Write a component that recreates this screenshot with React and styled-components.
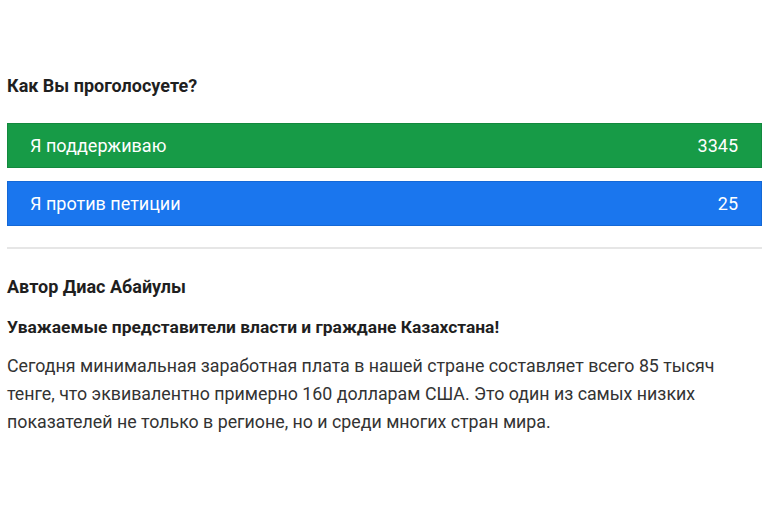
import React from "react";
import styled, { createGlobalStyle } from "styled-components";

const GlobalStyle = createGlobalStyle`
  html, body {
    margin: 0;
    padding: 0;
    background: #fff;
  }
  body {
    font-family: Roboto, "Noto Sans", sans-serif;
    color: #1f1f1f;
  }
`;

const Page = styled.div`
  padding: 74px 5px 0 7px;
`;

const Question = styled.h3`
  margin: 0 0 25px;
  font-size: 18px;
  font-weight: 700;
  line-height: 24px;
`;

const Options = styled.div`
  display: flex;
  flex-direction: column;
  gap: 13px;
`;

const VoteButton = styled.button`
  display: flex;
  justify-content: space-between;
  align-items: center;
  height: 45px;
  padding: 0 23px 0 22px;
  border: 1px solid ${(p) => p.$border};
  background: ${(p) => p.$color};
  color: #fff;
  font-family: inherit;
  font-size: 18px;
  cursor: pointer;
`;

const Divider = styled.hr`
  margin: 21px 0 26px;
  border: 0;
  border-top: 2px solid #e6e6e6;
`;

const Author = styled.div`
  font-size: 18px;
  font-weight: 700;
  line-height: 24px;
  margin-bottom: 16px;
`;

const Title = styled.div`
  font-size: 17.4px;
  font-weight: 700;
  line-height: 24px;
  margin-bottom: 13px;
`;

const Text = styled.p`
  margin: 0;
  font-size: 17.8px;
  line-height: 28px;
  color: #333;
  max-width: 740px;
`;

const options = [
  { label: "Я поддерживаю", count: 3345, color: "#179b47", border: "#13893e" },
  { label: "Я против петиции", count: 25, color: "#1a76ee", border: "#1468d6" },
];

export default function App() {
  return (
    <>
      <GlobalStyle />
      <Page>
        <Question>Как Вы проголосуете?</Question>
        <Options>
          {options.map((o) => (
            <VoteButton key={o.label} $color={o.color} $border={o.border}>
              <span>{o.label}</span>
              <span>{o.count}</span>
            </VoteButton>
          ))}
        </Options>
        <Divider />
        <Author>Автор Диас Абайулы</Author>
        <Title>Уважаемые представители власти и граждане Казахстана!</Title>
        <Text>
          Сегодня минимальная заработная плата в нашей стране составляет всего 85 тысяч
          тенге, что эквивалентно примерно 160 долларам США. Это один из самых низких
          показателей не только в регионе, но и среди многих стран мира.
        </Text>
      </Page>
    </>
  );
}
